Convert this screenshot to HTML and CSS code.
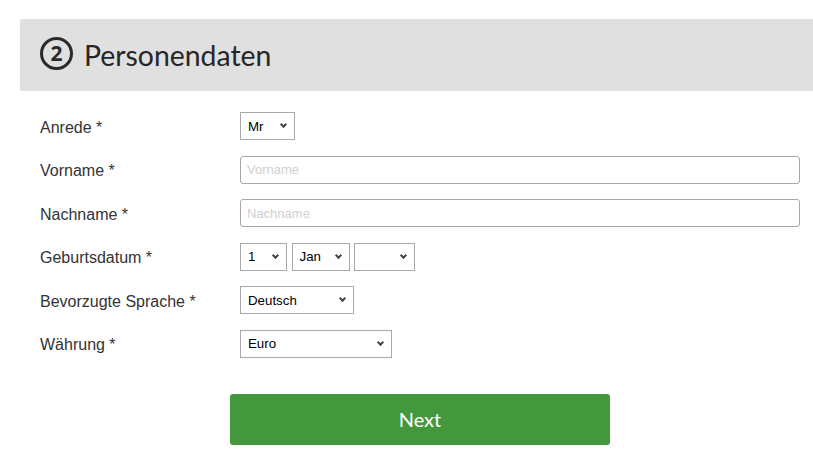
FILE: index.html
```html
<!DOCTYPE html>
<html lang="de">
<head>
<meta charset="utf-8">
<title>Personendaten</title>
<link rel="stylesheet" href="styles.css">
</head>
<body>
<section class="panel">
  <header class="panel-head">
    <span class="step">2</span>
    <h1 class="title">Personendaten</h1>
  </header>
  <form class="form">
    <div class="row">
      <label class="label">Anrede *</label>
      <span class="sel w-mr"><select><option>Mr</option></select></span>
    </div>
    <div class="row">
      <label class="label">Vorname *</label>
      <input class="text" type="text" placeholder="Vorname">
    </div>
    <div class="row">
      <label class="label">Nachname *</label>
      <input class="text" type="text" placeholder="Nachname">
    </div>
    <div class="row">
      <label class="label">Geburtsdatum *</label>
      <div class="group">
        <span class="sel w-day"><select><option>1</option></select></span>
        <span class="sel w-month"><select><option>Jan</option></select></span>
        <span class="sel w-year"><select><option></option></select></span>
      </div>
    </div>
    <div class="row">
      <label class="label">Bevorzugte Sprache *</label>
      <span class="sel w-lang"><select><option>Deutsch</option></select></span>
    </div>
    <div class="row">
      <label class="label">Währung *</label>
      <span class="sel w-cur"><select><option>Euro</option></select></span>
    </div>
    <div class="actions">
      <button class="next" type="button">Next</button>
    </div>
  </form>
</section>
</body>
</html>
```

FILE: styles.css
```css
html, body {
  margin: 0;
  padding: 0;
  background: #ffffff;
}
body {
  padding: 19px 0 0 20px;
}
.panel-head {
  height: 72px;
  background: #e0e0e0;
  border-radius: 2px 0 0 2px;
  display: flex;
  align-items: center;
  padding-left: 20px;
  box-sizing: border-box;
}
.step {
  width: 27px;
  height: 27px;
  border: 3px solid #2a2a2a;
  border-radius: 50%;
  display: flex;
  align-items: center;
  justify-content: center;
  font-family: "Open Sans", sans-serif;
  font-weight: 700;
  font-size: 21px;
  color: #2a2a2a;
  line-height: 1;
  margin-top: -3px;
}
.title {
  margin: 0 0 0 11px;
  font-family: "Lato", sans-serif;
  font-weight: 400;
  font-size: 28.4px;
  color: #262626;
}
.form {
  padding: 21px 0 0 20px;
  display: flex;
  flex-direction: column;
  gap: 15.6px;
}
.row {
  display: flex;
  align-items: center;
  height: 28px;
}
.label {
  width: 200px;
  font-family: "Liberation Sans", Arial, sans-serif;
  font-size: 16px;
  color: #333333;
  padding-top: 3px;
}
.text {
  width: 560px;
  height: 28px;
  box-sizing: border-box;
  border: 1px solid #a6a6a6;
  border-radius: 3px;
  padding: 0 6px;
  font-family: "Liberation Sans", Arial, sans-serif;
  font-size: 13px;
  color: #000;
  outline: none;
}
.text::placeholder {
  color: #cfcfcf;
}
.group {
  display: flex;
  gap: 4.5px;
}
.sel {
  position: relative;
  display: inline-block;
  height: 28px;
}
.sel select {
  appearance: none;
  -webkit-appearance: none;
  width: 100%;
  height: 28px;
  box-sizing: border-box;
  border: 1px solid #a9a9a9;
  border-radius: 0;
  background: #ffffff;
  padding: 0 0 0 7px;
  font-family: "Liberation Sans", Arial, sans-serif;
  font-size: 13.3px;
  color: #000;
  outline: none;
}
.sel::after {
  content: "";
  position: absolute;
  right: 9px;
  top: 10px;
  width: 3px;
  height: 3px;
  border-right: 2px solid #444;
  border-bottom: 2px solid #444;
  transform: rotate(45deg);
  pointer-events: none;
}
.w-mr { width: 55px; }
.w-day { width: 47px; }
.w-month { width: 58px; }
.w-year { width: 61px; }
.w-lang { width: 114px; }
.w-cur { width: 152px; }
.actions {
  padding: 20px 0 0 190px;
}
.next {
  width: 380px;
  height: 51px;
  background: #43973c;
  border: none;
  border-radius: 3px;
  color: #ffffff;
  font-family: "Lato", sans-serif;
  font-size: 20px;
  cursor: pointer;
}
```
